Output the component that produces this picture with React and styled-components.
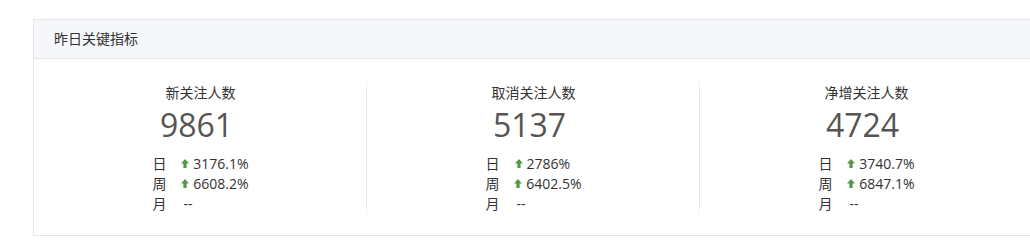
import React from "react";
import styled, { createGlobalStyle } from "styled-components";

const GlobalStyle = createGlobalStyle`
  html, body {
    margin: 0;
    padding: 0;
    background: #fff;
    overflow: hidden;
  }
  body {
    font-family: "Open Sans", "Noto Sans CJK SC", sans-serif;
    color: #333;
  }
`;

const metrics = [
  {
    title: "新关注人数",
    value: "9861",
    day: "3176.1%",
    week: "6608.2%",
  },
  {
    title: "取消关注人数",
    value: "5137",
    day: "2786%",
    week: "6402.5%",
  },
  {
    title: "净增关注人数",
    value: "4724",
    day: "3740.7%",
    week: "6847.1%",
  },
];

const UpArrow = () => (
  <svg width="8" height="9" viewBox="0 0 8 9">
    <polygon
      points="4,0 8,4.6 5.6,4.6 5.6,9 2.4,9 2.4,4.6 0,4.6"
      fill="#4f9a44"
    />
  </svg>
);

const Trend = ({ label, value }) => (
  <TrendRow>
    <span className="label">{label}</span>
    {value ? (
      <span className="value">
        <UpArrow />
        {value}
      </span>
    ) : (
      <span className="value empty">--</span>
    )}
  </TrendRow>
);

export default function App() {
  return (
    <Page>
      <GlobalStyle />
      <Panel>
        <PanelHeader>昨日关键指标</PanelHeader>
        <PanelBody>
          {metrics.map((m, i) => (
            <Metric key={m.title} $last={i === metrics.length - 1}>
              <MetricTitle>{m.title}</MetricTitle>
              <MetricValue>{m.value}</MetricValue>
              <TrendList>
                <Trend label="日" value={m.day} />
                <Trend label="周" value={m.week} />
                <Trend label="月" />
              </TrendList>
            </Metric>
          ))}
        </PanelBody>
      </Panel>
    </Page>
  );
}

const Page = styled.div`
  padding: 19px 0 0 33px;
`;

const Panel = styled.section`
  width: 1000px;
  border: 1px solid #e6e6e6;
  border-right: none;
  background: #fff;
`;

const PanelHeader = styled.div`
  height: 38px;
  line-height: 38px;
  padding-left: 20px;
  font-size: 14px;
  color: #333;
  background: #f6f7fa;
  border-bottom: 1px solid #e6e6e6;
`;

const PanelBody = styled.div`
  display: grid;
  grid-template-columns: repeat(3, 333px);
  padding: 18px 0 16px;
`;

const Metric = styled.div`
  position: relative;
  display: flex;
  flex-direction: column;
  align-items: center;
  padding-top: 6px;
  height: 136px;

  &::after {
    content: "";
    display: ${(p) => (p.$last ? "none" : "block")};
    position: absolute;
    top: 0;
    bottom: 0;
    right: 0;
    width: 1px;
    background: linear-gradient(
      to bottom,
      rgba(230, 230, 230, 0),
      #e6e6e6 12%,
      #e6e6e6 88%,
      rgba(230, 230, 230, 0)
    );
  }
`;

const MetricTitle = styled.div`
  font-size: 14px;
  line-height: 20px;
  color: #333;
`;

const MetricValue = styled.div`
  margin-top: 4px;
  font-size: 32px;
  line-height: 36px;
  color: #555;
  margin-right: 8px;
`;

const TrendList = styled.div`
  margin-top: 10px;
  display: flex;
  flex-direction: column;
  width: 96px;
`;

const TrendRow = styled.div`
  display: flex;
  align-items: center;
  height: 20px;
  font-size: 14px;
  color: #333;

  .label {
    width: 29px;
  }

  .value {
    display: flex;
    align-items: center;
    gap: 4px;
  }

  .empty {
    padding-left: 2px;
  }
`;
